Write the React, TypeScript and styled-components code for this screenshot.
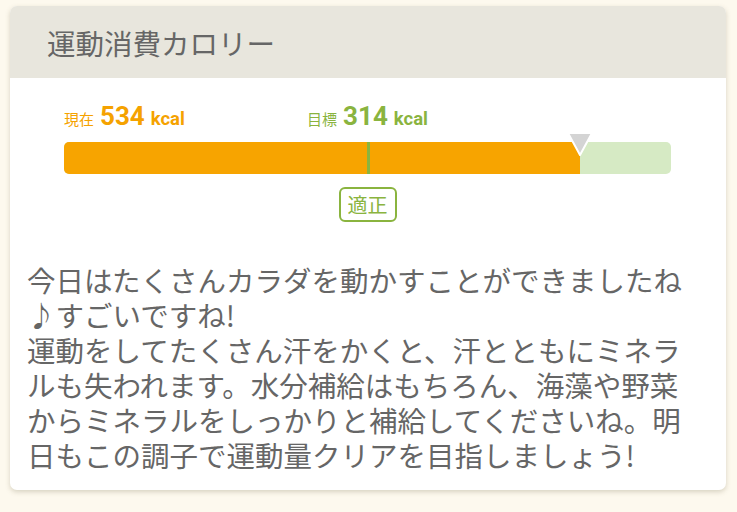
import React from 'react';
import styled, { createGlobalStyle } from 'styled-components';

// 消費カロリーのデータ
const calorie = { current: 534, goal: 314 };
const goalPct = 50;
const currentPct = 85;

const GlobalStyle = createGlobalStyle`
  html, body {
    margin: 0;
    padding: 0;
    background: #fdf9ee;
  }
  body {
    font-family: 'Noto Sans CJK JP', 'Noto Sans', sans-serif;
  }
`;

const Page = styled.div`
  width: 737px;
  min-height: 512px;
  box-sizing: border-box;
  padding: 6px 11px 0 10px;
`;

const Card = styled.section`
  background: #fff;
  border-radius: 7px;
  overflow: hidden;
  box-shadow: 0 2px 5px rgba(120, 110, 80, 0.28);
`;

const Header = styled.header`
  height: 72px;
  display: flex;
  align-items: center;
  padding-left: 37px;
  background: #e8e6dd;
`;

const Title = styled.h2`
  margin: 0;
  font-size: 28.5px;
  font-weight: 400;
  color: #666;
`;

const Gauge = styled.div`
  padding: 23px 55px 0 54px;
`;

const LabelRow = styled.div`
  position: relative;
  height: 30px;
  display: flex;
  align-items: baseline;
`;

const Label = styled.div<{ $color: string }>`
  display: flex;
  align-items: baseline;
  white-space: nowrap;
  color: ${p => p.$color};
  line-height: 30px;
`;

const GoalLabel = styled(Label)`
  position: absolute;
  top: 0;
  transform: translateX(-50%);
`;

const LabelName = styled.span`
  font-size: 15px;
  margin-right: 6px;
`;

const Value = styled.span`
  font-family: Roboto, 'Liberation Sans', sans-serif;
  font-weight: 700;
  font-size: 26px;
`;

const Unit = styled.span`
  font-family: Roboto, 'Liberation Sans', sans-serif;
  font-weight: 700;
  font-size: 18.5px;
  margin-left: 6px;
`;

const BarWrap = styled.div`
  position: relative;
  margin-top: 11px;
  height: 32px;
`;

const Track = styled.div`
  height: 100%;
  display: flex;
  border-radius: 5px;
  overflow: hidden;
  background: #d6eac4;
`;

const Fill = styled.div`
  height: 100%;
  background: #f7a400;
`;

const GoalLine = styled.div`
  position: absolute;
  top: 0;
  bottom: 0;
  width: 3px;
  margin-left: -1px;
  background: #8ab43f;
`;

const Pointer = styled.svg`
  position: absolute;
  top: -10px;
  margin-left: -13px;
`;

const BadgeRow = styled.div`
  position: relative;
  height: 35px;
  margin-top: 13px;
`;

const Badge = styled.div`
  position: absolute;
  top: 0;
  transform: translateX(-50%);
  box-sizing: border-box;
  height: 35px;
  padding: 0 7px;
  display: flex;
  align-items: center;
  border: 2px solid #8ab43f;
  border-radius: 6px;
  color: #8ab43f;
  font-size: 20px;
`;

const Message = styled.p`
  margin: 0;
  padding: 40px 29px 18px 17px;
  font-size: 28.5px;
  line-height: 35px;
  color: #666;
  word-break: break-all;
`;

const App: React.FC = () => (
  <>
    <GlobalStyle />
    <Page>
      <Card>
        <Header>
          <Title>運動消費カロリー</Title>
        </Header>
        <Gauge>
          <LabelRow>
            <Label $color="#f5a200">
              <LabelName>現在</LabelName>
              <Value>{calorie.current}</Value>
              <Unit>kcal</Unit>
            </Label>
            <GoalLabel $color="#8ab43f" style={{ left: `${goalPct}%` }}>
              <LabelName>目標</LabelName>
              <Value>{calorie.goal}</Value>
              <Unit>kcal</Unit>
            </GoalLabel>
          </LabelRow>
          <BarWrap>
            <Track>
              <Fill style={{ width: `${currentPct}%` }} />
            </Track>
            <GoalLine style={{ left: `${goalPct}%` }} />
            <Pointer width="26" height="24" viewBox="0 0 26 24" style={{ left: `${currentPct}%` }}>
              <polygon points="1,1 25,1 13,23" fill="#d4d4d4" stroke="#fff" strokeWidth="2" strokeLinejoin="round" />
            </Pointer>
          </BarWrap>
          <BadgeRow>
            <Badge style={{ left: `${goalPct}%` }}>適正</Badge>
          </BadgeRow>
        </Gauge>
        <Message>
          今日はたくさんカラダを動かすことができましたね♪すごいですね!
          <br />
          運動をしてたくさん汗をかくと、汗とともにミネラルも失われます。水分補給はもちろん、海藻や野菜からミネラルをしっかりと補給してくださいね。明日もこの調子で運動量クリアを目指しましょう!
        </Message>
      </Card>
    </Page>
  </>
);

export default App;
